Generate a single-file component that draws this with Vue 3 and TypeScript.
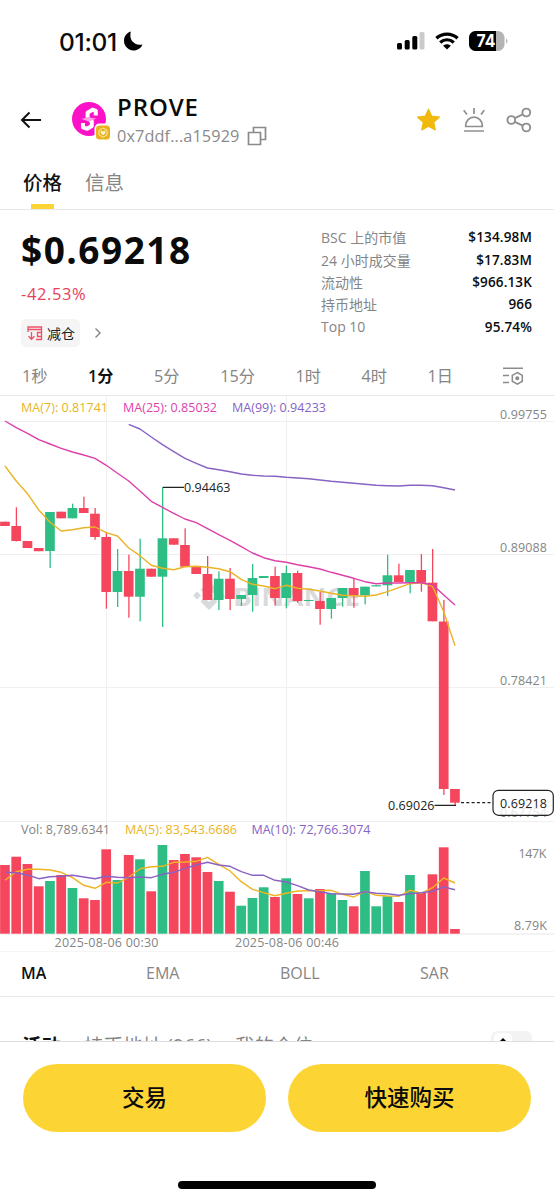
<script setup lang="ts">
interface Candle {
  up: boolean
  top: number
  bottom: number
  high: number
  low: number
  vol: number
}

const STEP = 11.25
const FIRST = 5
const VOL_BASE = 538.7

// [direction, body top, body bottom, high, low, volume bar top] in chart pixels
const raw: [number, number, number, number, number, number][] = [
  [0, 126.7, 131, 126.7, 131, 470], [0, 131, 146, 112.3, 146.5, 461.7],
  [0, 146, 153, 146, 153, 469], [0, 153, 156.2, 153, 156.2, 491.3],
  [1, 117, 156, 117, 173, 486], [0, 116.7, 123.3, 116.7, 123.3, 480],
  [1, 113, 123.3, 108.7, 123.3, 493], [0, 113, 118, 101.7, 118, 503.3],
  [0, 118.7, 142, 113, 144.7, 505], [0, 142, 197, 137.7, 213.7, 454.3],
  [1, 176, 197, 154, 212, 485], [0, 176, 201.7, 159.7, 222.7, 460],
  [1, 173.7, 201.7, 143.7, 226.3, 464.3], [0, 173.7, 181.7, 173.7, 181.7, 496.3],
  [1, 143.3, 181.7, 92, 232, 450], [0, 143.3, 149.7, 143.3, 149.7, 465],
  [0, 150, 171.7, 133.3, 171.7, 459], [0, 171.7, 179, 171.7, 179, 462.3],
  [0, 179, 205, 161, 205, 477], [1, 183.7, 205, 176.3, 215, 486],
  [0, 183.7, 204, 173, 215, 496.7], [1, 200, 204, 200, 211, 510.7],
  [1, 183, 200, 169, 216.7, 503], [1, 181, 183, 181, 183, 492.3],
  [0, 181, 203, 171.7, 210.7, 502], [1, 178, 203, 170.7, 213.3, 483.3],
  [0, 178, 206, 175.7, 207.7, 499], [1, 205, 206, 205, 206, 503.3],
  [0, 206, 214, 197, 229.7, 494], [1, 203, 214, 203, 223.7, 498.3],
  [1, 193, 203, 193, 211.7, 505], [0, 193, 200.3, 183, 212.7, 511.3],
  [1, 191.7, 200.3, 191.7, 209.3, 476], [1, 190.2, 191.4, 190.2, 191.4, 511.3],
  [1, 180.3, 190.3, 159.7, 201, 501.3], [0, 180.3, 187, 168.7, 187, 507],
  [1, 175, 187.7, 175, 198.3, 480], [0, 175, 187.7, 159, 196.7, 497.3],
  [0, 187.7, 226.3, 154, 226.3, 479.3], [0, 226.5, 394, 205, 400, 452.3],
  [0, 394, 407.7, 394, 410, 534],
]
const candles: Candle[] = raw.map(([d, top, bottom, high, low, vol]) => ({
  up: d === 1, top, bottom, high, low, vol,
}))

const cx = (i: number): number => FIRST + i * STEP
const line = (ys: number[], start = 0, offset = 0, unit = 1): string =>
  ys.map((y, i) => `${cx(i + start)},${(offset + y * unit).toFixed(1)}`).join(' ')

const third = 1 / 3
const ma7 = line([213, 258, 296, 345, 382, 408, 404, 398, 396, 413, 423, 459, 482, 511, 520, 524, 515, 514, 517, 521, 530, 553, 568, 573, 581, 571, 580, 583, 588, 595, 601, 602, 604, 600, 590, 578, 566, 563, 574, 650, 752], 0, 0, third)
const ma25 = line([78, 98, 115, 134, 147, 160, 171, 180, 190, 211, 235, 258, 288, 319, 337, 355, 372, 383, 401, 419, 436, 455, 474, 488, 497, 502, 509, 515, 522, 532, 541, 550, 560, 566, 564, 564, 563, 563, 569, 600, 630], 0, 0, third)
const ma99 = line([88, 102, 126, 149, 170, 190, 205, 219, 224, 230, 237, 241, 243, 244, 247, 249, 251, 255, 259, 262, 265, 268, 271, 272, 273, 271, 271, 272, 278, 285], 11, 0, third)
const vma5 = line([196, 170, 163, 163, 165, 172, 188, 211, 220, 202, 204, 187, 161, 155, 154, 142, 141, 139, 127, 148, 168, 200, 223, 233, 242, 235, 228, 227, 227, 226, 238, 246, 229, 241, 243, 244, 226, 235, 218, 189, 204], 0, 420, third)
const vma10 = line([172, 173, 180, 191, 185, 184, 181, 186, 191, 184, 187, 188, 186, 188, 178, 172, 160, 150, 142, 150, 154, 170, 181, 181, 196, 201, 212, 225, 230, 236, 237, 238, 230, 235, 236, 241, 236, 233, 229, 216, 224], 0, 420, third)

const stats = [
  { label: 'BSC 上的市值', value: '$134.98M' },
  { label: '24 小时成交量', value: '$17.83M' },
  { label: '流动性', value: '$966.13K' },
  { label: '持币地址', value: '966' },
  { label: 'Top 10', value: '95.74%' },
]
const intervals = ['1秒', '1分', '5分', '15分', '1时', '4时', '1日']
const indicators = ['MA', 'EMA', 'BOLL', 'SAR']
const scale = [
  { text: '0.99755', y: 23.5 },
  { text: '0.89088', y: 157 },
  { text: '0.78421', y: 290.3 },
  { text: '0.67754', y: 422 },
]
</script>

<template>
  <div class="screen">
    <header class="status">
      <span class="clock">01:01</span>
      <svg class="moon" width="20" height="20" viewBox="0 0 20 20"><path d="M7.800.6C4 1.700 1 5.200 1 9.700 1 15.100 5.300 19.400 10.600 19.400c4 0 7.500-2.500 8.900-6-1.200.3-2.200.4-3.200.3-5-.2-8.600-3.800-8.900-8.400-.1-1.600 0-3.200.4-4.700z" /></svg>
      <span class="spacer"></span>
      <svg class="signal" width="28" height="18" viewBox="0 0 28 18">
        <rect x="0" y="11" width="5" height="6.500" rx="1.500" />
        <rect x="7.700" y="8" width="5" height="9.500" rx="1.500" />
        <rect x="15.300" y="4" width="5" height="13.500" rx="1.500" />
        <rect x="22.500" y="0" width="5" height="17.500" rx="1.500" fill="#cbcbcb" />
      </svg>
      <svg class="wifi" width="24" height="18" viewBox="0 0 24 18" fill="none" stroke="#000">
        <path d="M1.400 6.300C7.500.7 16.500.7 22.600 6.300" stroke-width="3.300" />
        <path d="M5.200 10.500c4-3.700 9.600-3.700 13.600 0" stroke-width="3.200" />
        <path d="M8.200 13.700c2.200-2 5.400-2 7.600 0L12 17.600z" fill="#000" stroke="none" />
      </svg>
      <svg class="battery" width="39" height="20" viewBox="0 0 39 20">
        <defs><clipPath id="cell"><rect x="0" y="0" width="35.500" height="20" rx="6.500" /></clipPath></defs>
        <g clip-path="url(#cell)"><rect width="36" height="20" fill="#b4b4b4" /><rect width="27" height="20" /></g>
        <path d="M37 7.500c2 .7 2 4.300 0 5z" fill="#b4b4b4" />
        <text x="7.500" y="16.300" textLength="19" lengthAdjust="spacingAndGlyphs" class="charge">74</text>
      </svg>
    </header>

    <section class="token">
      <svg class="back" width="22" height="18" viewBox="0 0 22 18" fill="none" stroke="#111" stroke-width="2"><path d="M21 9H2M9.500 1.500 2 9l7.500 7.500" /></svg>
      <div class="avatar">
        <svg width="40" height="40" viewBox="0 0 40 40">
          <circle cx="17" cy="17" r="17" fill="#fb12c8" />
          <path d="M23.800 13.500V8.800l-3.200-1.200-5 3.200v5.400l4.200 3V24l-4.600 2.800-4.200-1.500V21" fill="none" stroke="#fff" stroke-width="4" stroke-linejoin="round" />
          <path d="m9.500 17 4.500-1.300 3-1 2 1 5.500.8-5 2-3.500.7-2-.7z" fill="#fb9ddf" />
          <rect x="22.500" y="21.500" width="17" height="18" rx="5" fill="#fff" />
          <rect x="24" y="23.500" width="14" height="14" rx="3.500" fill="#e9b31b" />
          <path d="m31 26 4 2.300v4.600l-4 2.300-4-2.300v-4.600z" fill="none" stroke="#fff1bd" stroke-width=".9" />
          <path d="m28.500 28.500 2.500 1 2.500-1-.5 3-2 1.800-2-1.800z" fill="#fff4cf" />
        </svg>
      </div>
      <div class="names">
        <div class="symbol">PROVE</div>
        <div class="address">
          <span>0x7ddf...a15929</span>
          <svg width="20" height="20" viewBox="0 0 20 20" fill="none" stroke="#8b8b8b" stroke-width="1.700"><path d="M1.500 6.500h12v12h-12zM6.500 6V1.500h12v12H14" /></svg>
        </div>
      </div>
      <div class="actions">
        <svg width="26" height="26" viewBox="0 0 26 26"><path d="m12.500 2.200 3.200 7 7.800.9-5.800 5.200 1.600 7.600-6.800-3.700-6.800 3.700 1.600-7.600-5.800-5.200 7.800-.9z" fill="#f0b90b" stroke="#f0b90b" stroke-width="1.200" stroke-linejoin="round" /></svg>
        <svg width="26" height="26" viewBox="0 0 26 26" fill="none" stroke="#8e8e8e" stroke-width="1.700"><path d="M4.700 19.500v-1a8.300 8.300 0 0 1 16.600 0v1zM3 24h20M13 1v6M2.700 3.300l3.300 4.200M23.300 3.300 20 7.500" /></svg>
        <svg width="26" height="26" viewBox="0 0 26 26" fill="none" stroke="#8e8e8e" stroke-width="1.900"><circle cx="5.300" cy="13" r="3.900" /><circle cx="20.300" cy="5.500" r="3.900" /><circle cx="20.300" cy="20.500" r="3.900" /><path d="m8.800 11.200 8-3.900M8.800 14.800l8 3.900" /></svg>
      </div>
    </section>

    <nav class="tabs">
      <span class="tab active">价格</span>
      <span class="tab">信息</span>
    </nav>

    <section class="summary">
      <div class="quote">
        <div class="price">$0.69218</div>
        <div class="change">-42.53%</div>
        <div class="tags">
          <span class="pill">
            <svg width="16" height="15" viewBox="0 0 16 15" fill="none" stroke="#ef5068" stroke-width="1.300"><path d="M1 6V1h13.500v4M1 3.500h13.500V13.500H9M14.500 6.500h-4v4h4M4.500 6v7M1.500 10.300l3 3 3-3" /></svg>
            减仓
          </span>
          <svg width="8" height="12" viewBox="0 0 8 12" fill="none" stroke="#858585" stroke-width="1.400"><path d="m1.500 1.500 4.500 4.500-4.500 4.500" /></svg>
        </div>
      </div>
      <dl class="stats">
        <div v-for="s in stats" :key="s.label"><dt>{{ s.label }}</dt><dd>{{ s.value }}</dd></div>
      </dl>
    </section>

    <nav class="intervals">
      <span v-for="(t, i) in intervals" :key="t" :class="{ active: i === 1 }">{{ t }}</span>
      <svg width="22" height="20" viewBox="0 0 22 20" fill="none" stroke="#8b8b8b" stroke-width="1.500"><path d="M1 2.200h20M1 9.500h6M1 16.500h6M15.300 6.500l5 2.900v5.800l-5 2.900-5-2.900V9.400z" /><circle cx="15.300" cy="12.300" r="1.300" fill="#8b8b8b" /></svg>
    </nav>

    <svg class="chart" width="554" height="556" viewBox="0 0 554 556">
      <g stroke="#f0f0f0" stroke-width="1">
        <path d="M0 26.500H554M0 159.500H554M0 292.500H554M0 426.500H554M106.500 0V539M286.500 0V539" />
        <path d="M0 .5H554M0 539H554" stroke="#e7e7e7" />
      </g>
      <g fill="#d9dadb">
        <path d="m209 186 8.500 8.500-4 4-4.500-4.500-4.500 4.500-4-4zM209 196.500l4 4-4 4-4-4zM197 196.500l4 4-4 4-4-4zM221 196.500l4 4-4 4-4-4zM200.500 206.500l4-4 4.500 4.500 4.500-4.500 4 4-8.500 8.500z" />
        <text x="233" y="211" textLength="127" lengthAdjust="spacingAndGlyphs" class="mark">BINANCE</text>
      </g>
      <g v-for="(c, i) in candles" :key="i" :fill="c.up ? '#2ebd85' : '#f6465d'">
        <rect :x="cx(i) - 4.9" :y="c.top" width="9.700" :height="c.bottom - c.top" />
        <rect :x="cx(i) - 0.5" :y="c.high" width="1.300" :height="c.low - c.high" />
        <rect :x="cx(i) - 4.9" :y="c.vol" width="9.700" :height="VOL_BASE - c.vol" />
      </g>
      <g fill="none" stroke-width="1.400" stroke-linejoin="round">
        <polyline :points="ma7" stroke="#e9b425" />
        <polyline :points="ma25" stroke="#dd3fab" />
        <polyline :points="ma99" stroke="#8663c5" />
        <polyline :points="vma5" stroke="#efb421" />
        <polyline :points="vma10" stroke="#8b61c4" />
      </g>
      <g class="legend">
        <text x="21" y="16.500" textLength="87" fill="#e9b425">MA(7): 0.81741</text>
        <text x="123" y="16.500" textLength="94" fill="#dd3fab">MA(25): 0.85032</text>
        <text x="232" y="16.500" textLength="94" fill="#8663c5">MA(99): 0.94233</text>
        <text x="21" y="439" textLength="89" fill="#858585">Vol: 8,789.6341</text>
        <text x="125" y="439" textLength="112" fill="#e9b425">MA(5): 83,543.6686</text>
        <text x="251.500" y="439" textLength="119" fill="#8663c5">MA(10): 72,766.3074</text>
      </g>
      <g class="axis">
        <text v-for="s in scale" :key="s.text" x="500" :y="s.y" textLength="47">{{ s.text }}</text>
        <text x="518.500" y="463" textLength="28">147K</text>
        <text x="514" y="535" textLength="33">8.79K</text>
        <text x="54.500" y="552" textLength="104">2025-08-06 00:30</text>
        <text x="235" y="552" textLength="104">2025-08-06 00:46</text>
      </g>
      <path d="M163 92.300H184M434.500 410.300H456" stroke="#222" stroke-width="1.200" />
      <path d="M461 407.700H493" stroke="#222" stroke-width="1.200" stroke-dasharray="3 2.300" />
      <rect x="493" y="395.300" width="60.300" height="25" rx="5.500" fill="#fff" fill-opacity=".8" stroke="#222" stroke-width="1.200" />
      <g class="callout">
        <text x="184" y="97" textLength="46.500">0.94463</text>
        <text x="388" y="414.500" textLength="46.500">0.69026</text>
        <text x="500" y="412.500" textLength="47">0.69218</text>
      </g>
    </svg>

    <nav class="indicators">
      <span v-for="(n, i) in indicators" :key="n" :class="{ active: i === 0 }">{{ n }}</span>
    </nav>

    <section class="feed">
      <span class="active">活动</span>
      <span>持币地址 (966)</span>
      <span>我的仓位</span>
      <div class="toggle"><i><svg width="8" height="8" viewBox="0 0 8 8"><path d="M4 0 8 4 4 8 0 4z" /></svg></i></div>
    </section>

    <footer class="trade">
      <div class="buttons"><button>交易</button><button>快速购买</button></div>
      <div class="home"></div>
    </footer>
  </div>
</template>

<style>
body { background: #fff; }
</style>

<style scoped>
.screen {
  width: 554px;
  height: 1200px;
  display: flex;
  flex-direction: column;
  overflow: hidden;
  background: #fff;
  color: #0b0b0b;
  font-family: "Open Sans", "Noto Sans CJK SC", sans-serif;
  white-space: nowrap;
}
.screen > * { flex-shrink: 0; box-sizing: border-box; }
svg { display: block; flex-shrink: 0; }
.status { height: 82px; padding: 0 46px 0 59px; display: flex; align-items: center; }
.clock { font: 500 24.500px/30px Inter, sans-serif; letter-spacing: -0.3px; width: 64px; padding-top: 2px; }
.spacer { flex: 1; }
.wifi { margin: 0 10px 0 10px; }
.charge { font: 700 18px Inter, sans-serif; fill: #fff; }
.token { height: 75px; padding: 0 22px 0 20px; display: flex; align-items: center; }
.avatar { margin: 5px 0 0 30px; }
.names { margin-left: 5px; padding-top: 5px; }
.symbol { font-size: 24px; line-height: 30px; font-weight: 600; margin-top: -2px; letter-spacing: 0.9px; }
.address { display: flex; align-items: center; gap: 8px; color: #8b8b8b; font-size: 16.300px; line-height: 28px; }
.address span { letter-spacing: 0.1px; }
.actions { margin-left: auto; display: flex; gap: 19px; }
.tabs { height: 53px; padding-left: 23px; display: flex; gap: 23px; border-bottom: 1px solid #e8e8e8; }
.tab { position: relative; font-size: 19.500px; line-height: 51px; color: #858585; }
.tab.active { color: #111; font-weight: 500; }
.tab.active::after { content: ""; position: absolute; left: 8px; bottom: 0; width: 23px; height: 5px; background: #fcd535; }
.summary { height: 147px; padding: 15px 22px 0 21px; display: flex; justify-content: space-between; }
.price { font-size: 37px; line-height: 50px; font-weight: 700; letter-spacing: 1.500px; }
.change { margin-top: 7px; color: #e8425a; font-size: 16.500px; line-height: 24px; font-weight: 500; letter-spacing: 0.600px; }
.tags { margin-top: 13px; display: flex; align-items: center; gap: 14px; }
.pill { width: 59px; height: 28px; box-sizing: border-box; padding-left: 6px; border-radius: 5px; background: #f5f5f5; display: flex; align-items: center; gap: 4px; font-size: 14px; color: #222; }
.stats { margin: 1px 0 0; width: 211px; }
.stats > div { display: flex; justify-content: space-between; align-items: center; height: 22.400px; }
.stats dt { color: #858585; font-size: 14px; }
.stats dd { margin: 0; font-size: 13.500px; font-weight: 600; letter-spacing: 0.150px; }
.intervals { height: 38px; padding: 0 30px 0 22px; display: flex; align-items: center; gap: 40.600px; font-size: 16.200px; line-height: 20px; color: #858585; }
.intervals .active { color: #111; font-weight: 600; }
.intervals svg { margin-left: auto; }
.mark { font: 700 25px "Open Sans", sans-serif; }
.legend { font-size: 12.500px; }
.axis { font-size: 12.500px; fill: #858585; }
.callout { font-size: 12.500px; fill: #222; }
.indicators { height: 46px; padding: 0 22px 2px 21px; display: grid; grid-template-columns: 125px 134px 140px auto; align-items: center; font-size: 16px; color: #858585; border-top: 1px solid #f5f5f5; border-bottom: 1px solid #e8e8e8; }
.indicators .active { color: #111; font-weight: 600; }
.feed { height: 44px; padding: 35px 22px 0; display: flex; gap: 23px; overflow: hidden; font-size: 19.500px; line-height: 28px; color: #858585; }
.feed .active { color: #111; font-weight: 700; }
.toggle { margin: -1px 0 0 auto; width: 41px; height: 24px; border-radius: 6px; background: #f3f3f3; }
.toggle i { display: flex; justify-content: center; width: 18px; height: 20px; margin: 2px 3px; padding-top: 5px; box-sizing: border-box; border-radius: 5px; background: #fff; }
.trade { height: 160px; padding: 22px 23px 0; border-top: 1px solid #dedede; background: #fff; }
.buttons { display: grid; grid-template-columns: 1fr 1fr; gap: 22px; }
button { height: 67.500px; padding: 0 0 3px; border: 0; border-radius: 34px; background: #fcd535; color: #0b0b0b; font: 500 22.500px "Noto Sans CJK SC", sans-serif; }
.home { width: 198px; height: 8px; margin: 49.500px auto 0; border-radius: 4px; background: #000; }
</style>
